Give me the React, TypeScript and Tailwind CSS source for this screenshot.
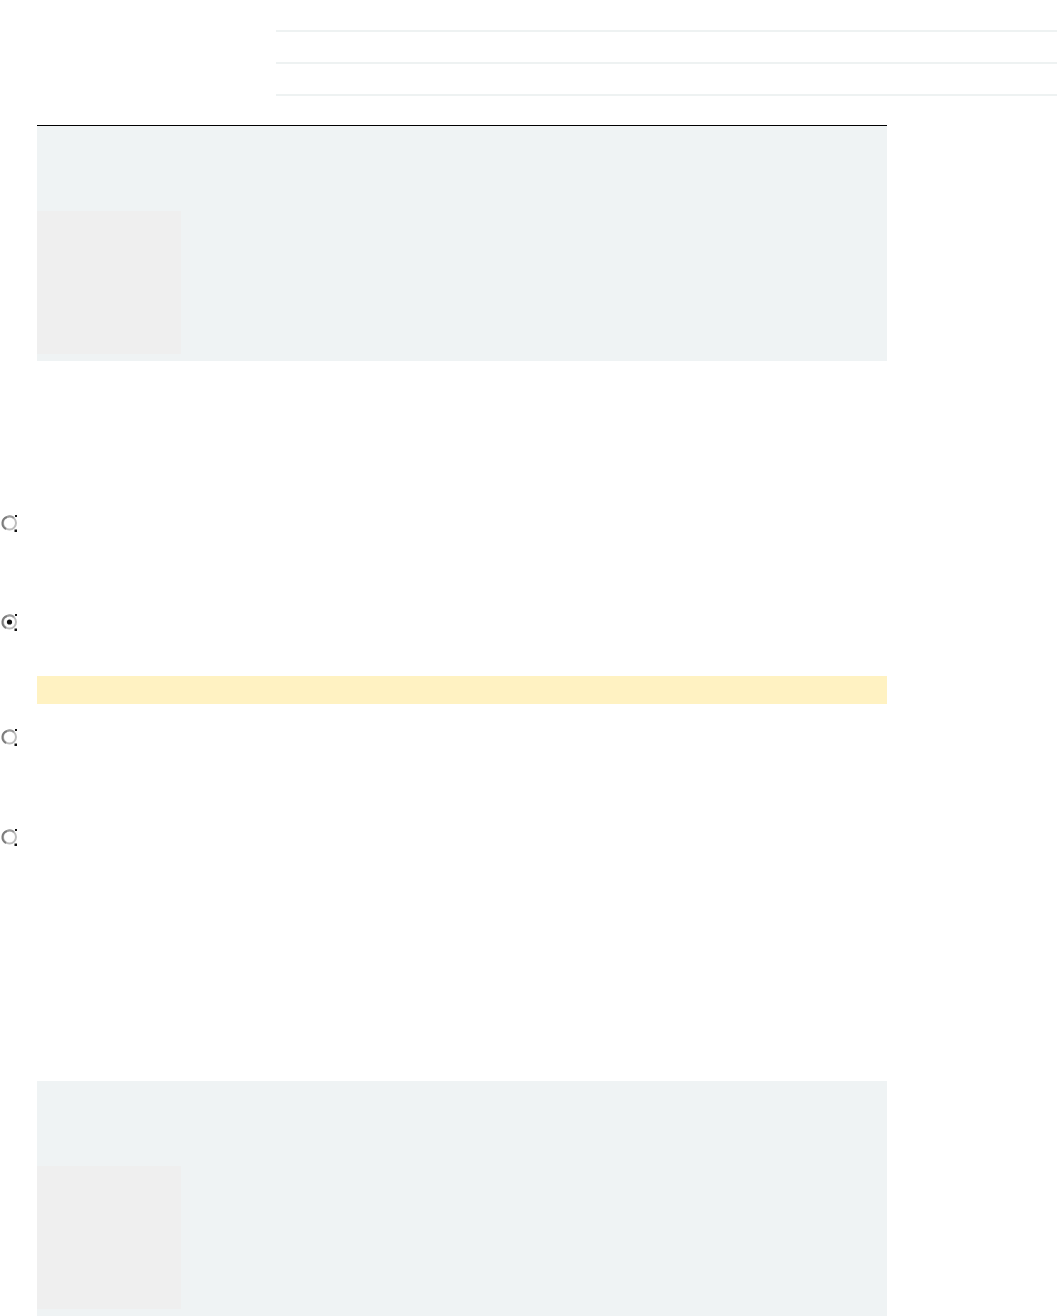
import React from "react"

function Radio({ checked }: { checked?: boolean }) {
    return (
        <svg width="18" height="18" viewBox="0 0 18 18" className="block">
            <circle cx="8.5" cy="9" r="6.5" fill="#fff" stroke="#bdbdbd" strokeWidth="2" />
            <path d="M6 3 A6.5 6.5 0 0 0 5 15" fill="none" stroke="#7c7c7c" strokeWidth="2" />
            <path d="M6 3 A6.5 6.5 0 0 1 13 4" fill="none" stroke="#9a9a9a" strokeWidth="2" />
            <rect x="14" y="1" width="2" height="2" fill="#111" />
            <rect x="13.5" y="15.5" width="2.5" height="2.5" fill="#111" />
            {checked && <circle cx="8.5" cy="9" r="2.6" fill="#111" />}
        </svg>
    )
}

function Panel({ topRule }: { topRule?: boolean }) {
    return (
        <div
            className={
                "ml-[37px] w-[850px] bg-[#eff3f4] pt-[85px] pb-[7px] " +
                (topRule ? "border-t border-black" : "")
            }
        >
            <div className="h-[143px] w-[144px] bg-[#efefef]" />
        </div>
    )
}

export default function App() {
    return (
        <div className="min-h-[1316px] bg-white font-['Liberation_Sans',sans-serif]">
            {/* Rules */}
            <div className="flex flex-col gap-[30px] pt-[30px] pl-[276px]">
                <div className="h-[2px] bg-[#eef2f2]" />
                <div className="h-[2px] bg-[#eef2f2]" />
                <div className="h-[2px] bg-[#eef2f2]" />
            </div>

            <div className="mt-[29px]">
                <Panel topRule />
            </div>

            {/* Options */}
            <div className="flex flex-col pl-[1px]">
                <div className="mt-[153px]">
                    <Radio />
                </div>
                <div className="mt-[81px]">
                    <Radio checked />
                </div>
                <div className="mt-[45px] ml-[36px] h-[28px] w-[850px] bg-[#fff2c2]" />
                <div className="mt-[24px]">
                    <Radio />
                </div>
                <div className="mt-[82px]">
                    <Radio />
                </div>
            </div>

            <div className="mt-[235px]">
                <Panel />
            </div>
        </div>
    )
}
